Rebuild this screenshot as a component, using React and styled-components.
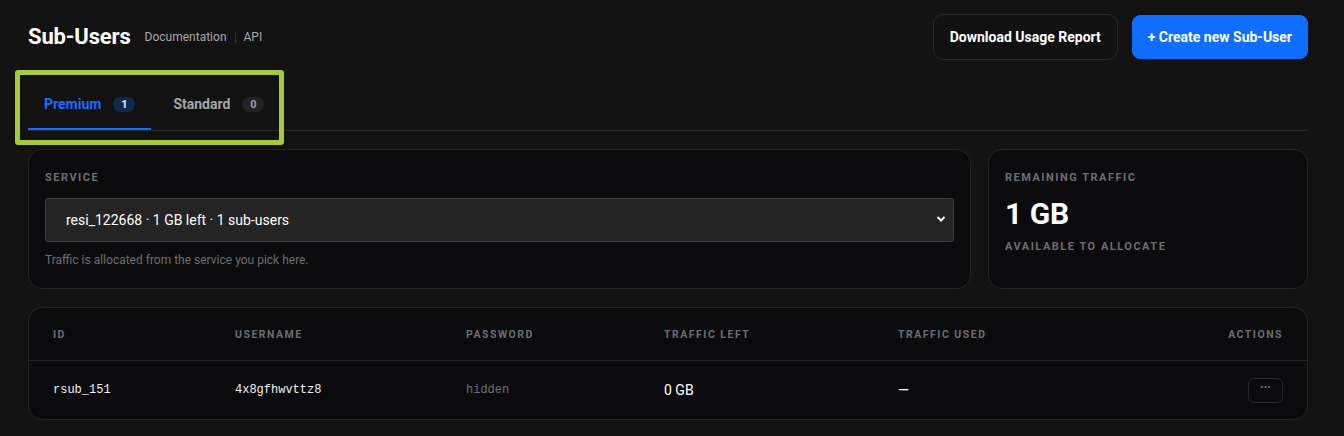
import React from 'react';
import styled, { createGlobalStyle } from 'styled-components';

const GlobalStyle = createGlobalStyle`
  html, body {
    margin: 0;
    padding: 0;
    background: #121212;
    font-family: Roboto, "Noto Sans", Arial, sans-serif;
    color: #fff;
  }
`;

const Page = styled.div`
  position: relative;
  padding: 14px 36px 16px 28px;
`;

const Header = styled.div`
  display: flex;
  align-items: center;
  justify-content: space-between;
  height: 45px;
`;

const TitleGroup = styled.div`
  display: flex;
  align-items: center;
  gap: 14px;
`;

const Title = styled.h1`
  margin: 0;
  font-size: 22px;
  font-weight: 700;
  letter-spacing: -0.15px;
  color: #fff;
`;

const Links = styled.div`
  display: flex;
  align-items: center;
  gap: 8px;
  font-size: 12px;
  color: #a9a9a9;
  margin-top: 1px;
`;

const Sep = styled.span`
  width: 1px;
  height: 11px;
  background: #333;
`;

const Actions = styled.div`
  display: flex;
  gap: 14px;
  align-items: center;
`;

const Button = styled.button`
  font-family: Roboto, Arial, sans-serif;
  font-size: 14px;
  font-weight: 700;
  color: #fff;
  height: ${p => (p.primary ? '44px' : '46px')};
  padding: 0 ${p => (p.primary ? '15px' : '16px')};
  border-radius: ${p => (p.primary ? '8px' : '10px')};
  border: 1px solid ${p => (p.primary ? '#0f6efd' : '#272727')};
  background: ${p => (p.primary ? '#0f6efd' : '#111111')};
  cursor: pointer;
`;

const TabBar = styled.div`
  display: flex;
  gap: 6px;
  margin-top: 19px;
  border-bottom: 1px solid #262626;
`;

const Tab = styled.div`
  display: flex;
  align-items: center;
  gap: 12px;
  height: 52px;
  padding: 2px 16px 0 16px;
  font-size: 14px;
  font-weight: 700;
  color: ${p => (p.active ? '#1a6cff' : '#a6a6a6')};
  border-bottom: 2px solid ${p => (p.active ? '#1a6cff' : 'transparent')};
  box-sizing: border-box;
`;

const Badge = styled.span`
  display: inline-flex;
  align-items: center;
  justify-content: center;
  min-width: 22px;
  height: 15px;
  border-radius: 8px;
  font-size: 11px;
  font-weight: 700;
  color: ${p => (p.active ? '#e8eefc' : '#a0a0a0')};
  background: ${p => (p.active ? '#10294a' : '#232325')};
  margin-top: 1px;
`;

const Highlight = styled.div`
  position: absolute;
  left: 15px;
  top: 70px;
  width: 269px;
  height: 75px;
  border: 5px solid #a7c93d;
  border-radius: 3px;
  box-sizing: border-box;
  pointer-events: none;
`;

const CardGrid = styled.div`
  display: grid;
  grid-template-columns: 1fr 320px;
  gap: 17px;
  margin-top: 18px;
`;

const Card = styled.div`
  background: #0b0b0d;
  border: 1px solid #232326;
  border-radius: 14px;
  box-sizing: border-box;
  height: 140px;
  padding: 21px 16px 0 16px;
`;

const Label = styled.div`
  font-size: 11px;
  font-weight: 700;
  letter-spacing: 1.5px;
  text-transform: uppercase;
  color: #6c6e73;
  line-height: 13px;
`;

const SelectWrap = styled.div`
  position: relative;
  margin-top: 14px;
`;

const Select = styled.select`
  width: 100%;
  height: 44px;
  appearance: none;
  -webkit-appearance: none;
  background: #242424;
  border: 1px solid #3c3c3c;
  border-radius: 3px;
  color: #fff;
  font-family: Roboto, Arial, sans-serif;
  font-size: 14px;
  padding: 0 20px;
  outline: none;
`;

const Chevron = styled.svg`
  position: absolute;
  right: 8px;
  top: 17px;
  pointer-events: none;
`;

const Helper = styled.div`
  margin-top: 11px;
  font-size: 12px;
  color: #6b6d72;
`;

const BigValue = styled.div`
  margin-top: 13px;
  font-size: 30px;
  font-weight: 700;
  color: #fff;
  line-height: 34px;
`;

const SubLabel = styled(Label)`
  margin-top: 9px;
`;

const TableCard = styled.div`
  margin-top: 18px;
  background: #0b0b0d;
  border: 1px solid #232326;
  border-radius: 14px;
  overflow: hidden;
`;

const Row = styled.div`
  display: grid;
  grid-template-columns: 182px 231px 198px 234px 1fr 80px;
  align-items: center;
  padding: 0 24px;
  height: ${p => (p.head ? '52px' : '58px')};
  border-bottom: ${p => (p.head ? '1px solid #222225' : 'none')};
`;

const HeadCell = styled(Label)`
  text-align: ${p => (p.right ? 'right' : 'left')};
  font-size: 10.5px;
  letter-spacing: 1.5px;
`;

const Mono = styled.div`
  font-family: "Liberation Mono", "DejaVu Sans Mono", monospace;
  font-size: 12px;
  color: ${p => (p.muted ? '#6c707a' : '#f2f2f2')};
`;

const Cell = styled.div`
  font-size: 14px;
  color: #fff;
`;

const ActionCell = styled.div`
  display: flex;
  justify-content: flex-end;
`;

const MoreButton = styled.button`
  width: 35px;
  height: 25px;
  border: 1px solid #28282b;
  border-radius: 6px;
  background: #0b0b0d;
  color: #8a8d93;
  font-family: Roboto, Arial, sans-serif;
  font-size: 12px;
  font-weight: 700;
  line-height: 1;
  padding: 0 0 5px 0;
  cursor: pointer;
`;

const users = [
  { id: 'rsub_151', username: '4x8gfhwvttz8', password: 'hidden', left: '0 GB', used: '—' },
];

export default function App() {
  return (
    <>
      <GlobalStyle />
      <Page>
        <Header>
          <TitleGroup>
            <Title>Sub-Users</Title>
            <Links>
              <span>Documentation</span>
              <Sep />
              <span>API</span>
            </Links>
          </TitleGroup>
          <Actions>
            <Button>Download Usage Report</Button>
            <Button primary>+ Create new Sub-User</Button>
          </Actions>
        </Header>

        <TabBar>
          <Tab active>
            Premium <Badge active>1</Badge>
          </Tab>
          <Tab>
            Standard <Badge>0</Badge>
          </Tab>
        </TabBar>

        <CardGrid>
          <Card>
            <Label>Service</Label>
            <SelectWrap>
              <Select defaultValue="resi_122668">
                <option value="resi_122668">resi_122668 · 1 GB left · 1 sub-users</option>
              </Select>
              <Chevron width="10" height="8" viewBox="0 0 10 8">
                <path d="M1.5 2 L5 5.5 L8.5 2" fill="none" stroke="#fff" strokeWidth="2" />
              </Chevron>
            </SelectWrap>
            <Helper>Traffic is allocated from the service you pick here.</Helper>
          </Card>
          <Card>
            <Label>Remaining Traffic</Label>
            <BigValue>1 GB</BigValue>
            <SubLabel>Available to allocate</SubLabel>
          </Card>
        </CardGrid>

        <TableCard>
          <Row head>
            <HeadCell>ID</HeadCell>
            <HeadCell>Username</HeadCell>
            <HeadCell>Password</HeadCell>
            <HeadCell>Traffic Left</HeadCell>
            <HeadCell>Traffic Used</HeadCell>
            <HeadCell right>Actions</HeadCell>
          </Row>
          {users.map(u => (
            <Row key={u.id}>
              <Mono>{u.id}</Mono>
              <Mono>{u.username}</Mono>
              <Mono muted>{u.password}</Mono>
              <Cell>{u.left}</Cell>
              <Cell>{u.used}</Cell>
              <ActionCell>
                <MoreButton>···</MoreButton>
              </ActionCell>
            </Row>
          ))}
        </TableCard>

        <Highlight />
      </Page>
    </>
  );
}
